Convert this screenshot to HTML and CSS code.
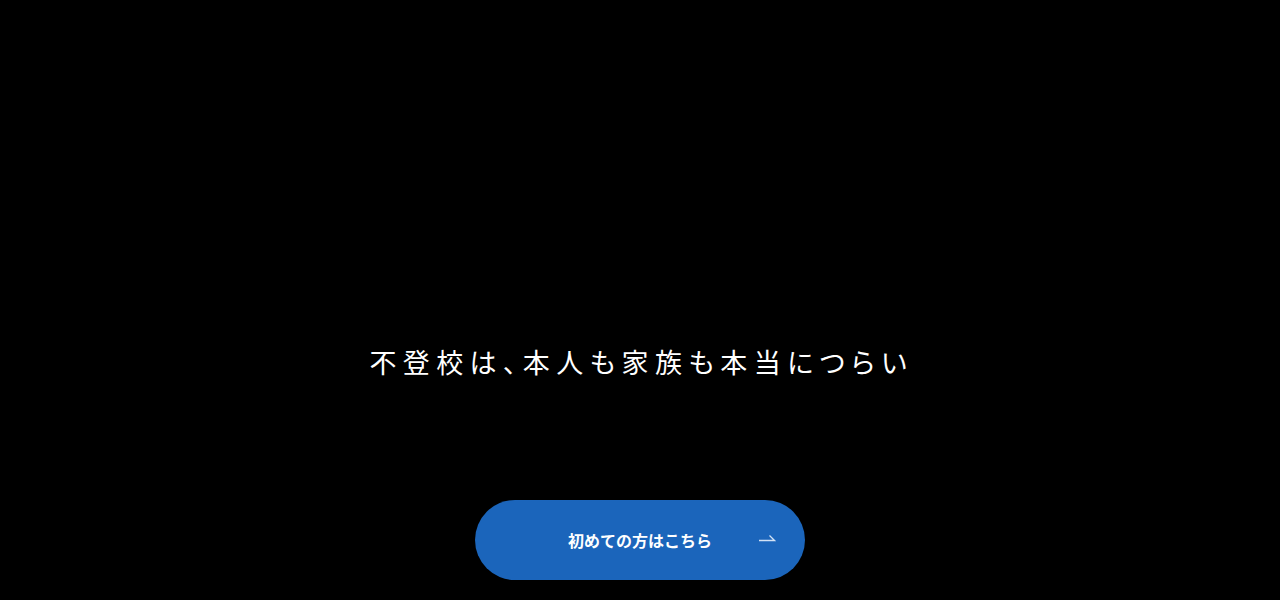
FILE: index.html
```html
<!DOCTYPE html>
<html lang="ja">
<head>
<meta charset="utf-8">
<link rel="stylesheet" href="styles.css">
</head>
<body>
<main class="hero">
  <h1 class="catch">不登校は、本人も家族も本当につらい</h1>
  <a class="cta" href="#">
    <span class="cta-label">初めての方はこちら</span>
    <svg class="cta-arrow" width="17" height="8" viewBox="0 0 17 8" aria-hidden="true">
      <path d="M0 6.5H15.5L10.5 1.5" fill="none" stroke="currentColor" stroke-width="1.3"/>
    </svg>
  </a>
</main>
</body>
</html>
```
FILE: styles.css
```css
html, body {
  margin: 0;
  padding: 0;
  background: #000;
  height: 100%;
}
.hero {
  height: 600px;
  display: flex;
  flex-direction: column;
  align-items: center;
  font-family: "Noto Sans CJK JP", "Noto Sans", sans-serif;
  color: #fff;
}
.catch {
  margin: 342px 0 0 0;
  font-size: 27px;
  font-weight: 400;
  line-height: 40px;
  letter-spacing: 6.4px;
  margin-right: -2.4px;
  font-feature-settings: "palt";
}
.cta {
  margin-top: 118px;
  width: 330px;
  height: 80px;
  border-radius: 40px;
  background: #1b65bb;
  display: flex;
  align-items: center;
  justify-content: center;
  position: relative;
  text-decoration: none;
  color: #fff;
}
.cta-label {
  font-size: 16px;
  font-weight: 700;
  letter-spacing: 0;
}
.cta-arrow {
  position: absolute;
  left: 284px;
  top: 34px;
  color: #d3e2f5;
}
```
